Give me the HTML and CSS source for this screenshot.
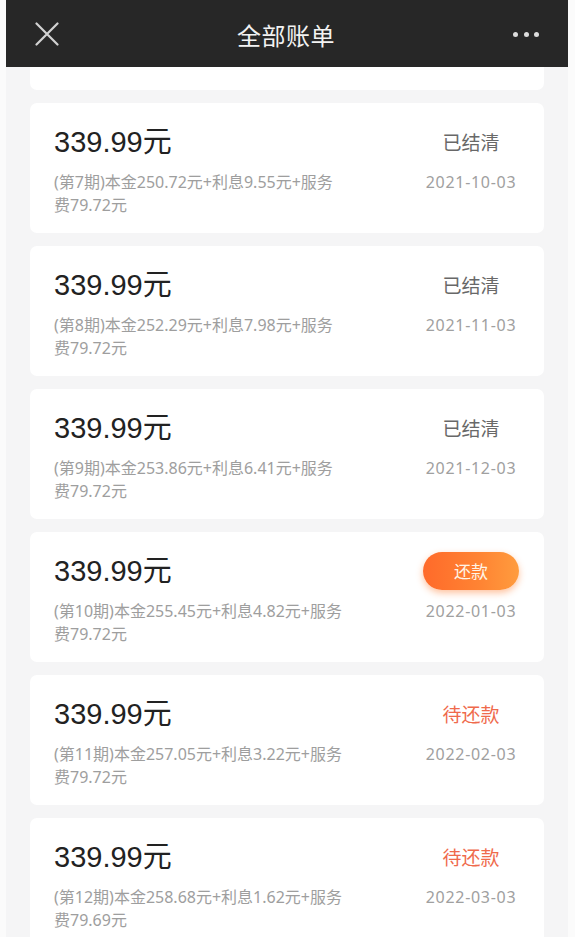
FILE: index.html
```html
<!DOCTYPE html>
<html lang="zh-CN">
<head>
<meta charset="utf-8">
<title>全部账单</title>
<link rel="stylesheet" href="styles.css">
</head>
<body>
<div class="screen">
  <header class="topbar">
    <span class="close">
      <svg width="24" height="24" viewBox="0 0 24 24"><path d="M1.5 1.5 L22.5 22.5 M22.5 1.5 L1.5 22.5" stroke="#d2d2d2" stroke-width="2.2" fill="none" stroke-linecap="round"/></svg>
    </span>
    <h1 class="title">全部账单</h1>
    <span class="more"><i></i><i></i><i></i></span>
  </header>
  <main class="viewport">
    <div class="list">
      <section class="card card-hidden"></section>
      <section class="card">
        <div class="amount">339.99元</div>
        <div class="status done">已结清</div>
        <div class="detail">(第7期)本金250.72元+利息9.55元+服务费79.72元</div>
        <div class="date">2021-10-03</div>
      </section>
      <section class="card">
        <div class="amount">339.99元</div>
        <div class="status done">已结清</div>
        <div class="detail">(第8期)本金252.29元+利息7.98元+服务费79.72元</div>
        <div class="date">2021-11-03</div>
      </section>
      <section class="card">
        <div class="amount">339.99元</div>
        <div class="status done">已结清</div>
        <div class="detail">(第9期)本金253.86元+利息6.41元+服务费79.72元</div>
        <div class="date">2021-12-03</div>
      </section>
      <section class="card">
        <div class="amount">339.99元</div>
        <div class="status"><button class="pay">还款</button></div>
        <div class="detail">(第10期)本金255.45元+利息4.82元+服务费79.72元</div>
        <div class="date">2022-01-03</div>
      </section>
      <section class="card">
        <div class="amount">339.99元</div>
        <div class="status due">待还款</div>
        <div class="detail">(第11期)本金257.05元+利息3.22元+服务费79.72元</div>
        <div class="date">2022-02-03</div>
      </section>
      <section class="card">
        <div class="amount">339.99元</div>
        <div class="status due">待还款</div>
        <div class="detail">(第12期)本金258.68元+利息1.62元+服务费79.69元</div>
        <div class="date">2022-03-03</div>
      </section>
    </div>
  </main>
</div>
</body>
</html>
```

FILE: styles.css
```css
* { box-sizing: border-box; }
html, body {
  margin: 0;
  padding: 0;
  height: 100%;
}
body {
  background: #fbfbfb;
  font-family: "Liberation Sans", "Noto Sans CJK SC", sans-serif;
  overflow: hidden;
}
.screen {
  margin: 0 7px 0 6px;
  height: 937px;
  background: #f5f5f6;
  display: flex;
  flex-direction: column;
  overflow: hidden;
}
.topbar {
  flex: 0 0 67px;
  height: 67px;
  background: #272727;
  display: flex;
  align-items: center;
  justify-content: space-between;
  padding: 0 29px 0 29px;
  position: relative;
  z-index: 2;
}
.close {
  width: 24px;
  height: 24px;
  display: block;
  margin-top: 1px;
}
.close svg { display: block; }
.title {
  margin: 0;
  font-family: "Noto Sans CJK SC", sans-serif;
  font-weight: 400;
  font-size: 24px;
  line-height: 30px;
  color: #f2f2f2;
  letter-spacing: 0.5px;
  margin-top: 2px;
}
.more {
  display: flex;
  gap: 5.5px;
  margin-top: 1px;
}
.more i {
  display: block;
  width: 5px;
  height: 5px;
  border-radius: 50%;
  background: #dcdcdc;
}
.viewport {
  flex: 1;
  overflow: hidden;
}
.list {
  margin-top: -107px;
  padding: 0 24px;
  display: flex;
  flex-direction: column;
  gap: 13px;
}
.card {
  height: 130px;
  flex: 0 0 130px;
  background: #ffffff;
  border-radius: 7px;
  padding: 24px 25px 0 24px;
  display: grid;
  grid-template-columns: 1fr 96px;
  grid-template-rows: 30px auto;
  row-gap: 14px;
}
.amount {
  font-size: 29px;
  line-height: 30px;
  color: #222222;
}
.status {
  justify-self: center;
  align-self: center;
  font-family: "Noto Sans CJK SC", sans-serif;
  font-size: 19px;
  line-height: 30px;
  white-space: nowrap;
}
.status.done { color: #686868; }
.status.due { color: #ef6a4c; }
.pay {
  display: block;
  margin: -4px 0;
  width: 96px;
  height: 38px;
  border: 0;
  border-radius: 19px;
  background: linear-gradient(90deg, #ff6a2a 0%, #ff8433 60%, #ff9c3e 100%);
  box-shadow: 0 3px 7px rgba(255, 120, 40, 0.45);
  color: #fff4e6;
  font-family: "Noto Sans CJK SC", sans-serif;
  font-size: 17px;
  line-height: 38px;
  padding: 0;
}
.detail {
  width: 292px;
  font-family: "Noto Sans", "Noto Sans CJK SC", sans-serif;
  font-size: 16px;
  line-height: 23px;
  color: #9e9e9e;
}
.date {
  justify-self: center;
  font-family: "Noto Sans", sans-serif;
  font-size: 16px;
  line-height: 23px;
  letter-spacing: 0.7px;
  color: #a0a0a0;
  white-space: nowrap;
}
```
